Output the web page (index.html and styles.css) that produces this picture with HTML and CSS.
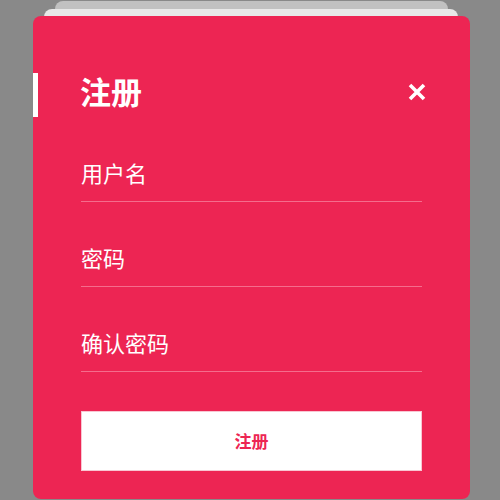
FILE: index.html
```html
<!DOCTYPE html>
<html lang="zh">
<head>
<meta charset="utf-8">
<title>注册</title>
<link rel="stylesheet" href="styles.css">
</head>
<body>
<div class="stage">
  <div class="card">
    <div class="header">
      <span class="bar"></span>
      <h1 class="title">注册</h1>
      <span class="close" aria-label="关闭">
        <svg width="18" height="18" viewBox="0 0 18 18"><path d="M2 2 L16 16 M16 2 L2 16" stroke="#fff" stroke-width="3.6" stroke-linecap="butt"/></svg>
      </span>
    </div>
    <div class="field"><span class="label">用户名</span></div>
    <div class="field"><span class="label">密码</span></div>
    <div class="field"><span class="label">确认密码</span></div>
    <button class="btn">注册</button>
  </div>
</div>
</body>
</html>
```
FILE: styles.css
```css
html, body {
  margin: 0;
  padding: 0;
  background: #898989;
  width: 500px;
  height: 500px;
  overflow: hidden;
  font-family: "Noto Sans CJK SC", "Noto Sans", sans-serif;
}
.stage {
  position: relative;
  padding: 16px 0 0 33px;
}
.stage::before,
.stage::after {
  content: "";
  position: absolute;
  border-radius: 8px;
}
.stage::before {
  left: 55px;
  top: 1px;
  width: 393px;
  height: 60px;
  background: #c1c1c1;
}
.stage::after {
  left: 44px;
  top: 9px;
  width: 414px;
  height: 60px;
  background: #e8e8e8;
}
.card {
  position: relative;
  z-index: 1;
  width: 437px;
  height: 483px;
  box-sizing: border-box;
  background: #ed2553;
  border-radius: 8px;
  padding: 57px 48px 0 48px;
}
.header {
  display: flex;
  align-items: center;
  margin-left: -48px;
  height: 44px;
}
.bar {
  width: 5px;
  height: 44px;
  background: #fff;
}
.title {
  margin: 0 0 0 42px;
  font-size: 31px;
  font-weight: 700;
  color: #fff;
  line-height: 44px;
  position: relative;
  top: -4px;
}
.close {
  margin-left: auto;
  margin-right: -4px;
  display: flex;
  position: relative;
  top: -3px;
}
.field {
  height: 84px;
  border-bottom: 1px solid #f56c8c;
  display: flex;
  align-items: flex-end;
}
.label {
  color: #fff;
  font-size: 22px;
  line-height: 22px;
  padding-bottom: 18px;
}
.btn {
  display: block;
  margin-top: 39px;
  width: 100%;
  height: 60px;
  background: #fff;
  border: 1px solid #f8c6d2;
  color: #ed2553;
  font-family: "Noto Sans CJK SC", "Noto Sans", sans-serif;
  font-size: 17px;
  font-weight: 700;
  padding: 0 0 2px 0;
}
```
